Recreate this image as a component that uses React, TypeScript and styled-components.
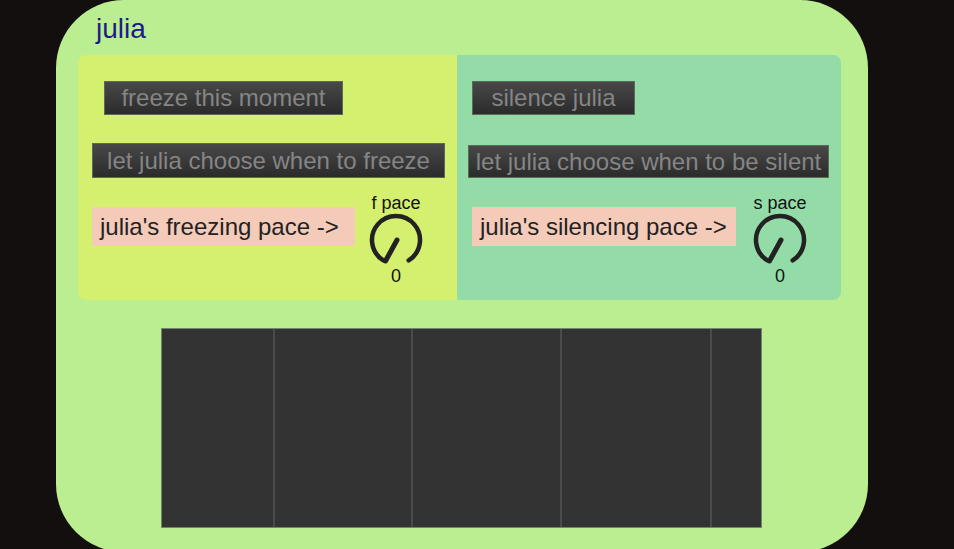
import React from 'react';
import styled, { createGlobalStyle } from "styled-components";

const GlobalStyle = createGlobalStyle`
  body {
    margin: 0;
    background: #130f0f;
    overflow: hidden;
    font-family: "Liberation Sans", Arial, sans-serif;
  }
`

type Side = 'left' | 'right'

const segments = [111, 138, 149, 150]

const Knob = (props: { label: string, value: number }) => {
    // arc over the top, gap of +-32deg round the bottom; pointer sits at the minimum
    return (
        <KnobWrapper>
            <KnobLabel>{props.label}</KnobLabel>
            <svg width="56" height="54" viewBox="0 0 56 54">
                <path d="M 15.3 47.4 A 24 24 0 1 1 40.7 47.4"
                      fill="none" stroke="#222" strokeWidth="4.5" strokeLinecap="round"/>
                <line x1="29" y1="27" x2="17.5" y2="48"
                      stroke="#222" strokeWidth="5" strokeLinecap="round"/>
            </svg>
            <KnobValue>{props.value}</KnobValue>
        </KnobWrapper>
    )
}

export default function App() {
    return (
        <Stage>
            <GlobalStyle/>
            <Patch>
                <Title>julia</Title>
                <Sections>
                    <Section side="left" tone="#d4f06e" width={379}>
                        <Button width={239} height={34} indent={26} top={0}>freeze this moment</Button>
                        <Button width={353} height={35} indent={14} top={28}>let julia choose when to freeze</Button>
                        <PaceRow indent={14}>
                            <PaceLabel width={263}>julia's freezing pace -&gt;</PaceLabel>
                            <KnobSlot gap={13}>
                                <Knob label="f pace" value={0}/>
                            </KnobSlot>
                        </PaceRow>
                    </Section>
                    <Section side="right" tone="#93dca7" width={384}>
                        <Button width={163} height={34} indent={15} top={0}>silence julia</Button>
                        <Button width={361} height={33} indent={11} top={30}>let julia choose when to be silent</Button>
                        <PaceRow indent={15}>
                            <PaceLabel width={264}>julia's silencing pace -&gt;</PaceLabel>
                            <KnobSlot gap={16}>
                                <Knob label="s pace" value={0}/>
                            </KnobSlot>
                        </PaceRow>
                    </Section>
                </Sections>
                <Timeline>
                    {segments.map((w, i) => (
                        <Segment key={i} first={i === 0} style={{width: w}}/>
                    ))}
                    <Segment first={false} style={{flex: 1}}/>
                </Timeline>
            </Patch>
        </Stage>
    );
}

const Stage = styled.div`
  height: 549px;
  padding-left: 56px;
`
const Patch = styled.div`
  box-sizing: border-box;
  width: 812px;
  height: 552px;
  padding: 15px 27px 0 22px;
  background: #bbee90;
  border-radius: 68px;
`
const Title = styled.div`
  margin-left: 18px;
  font-size: 28px;
  line-height: 28px;
  color: #1b1b8a;
`
const Sections = styled.div`
  display: flex;
  margin-top: 12px;
`
const Section = styled.div<{ side: Side, tone: string, width: number }>`
  box-sizing: border-box;
  width: ${p => p.width}px;
  height: 245px;
  padding-top: 26px;
  display: flex;
  flex-direction: column;
  align-items: flex-start;
  background: ${p => p.tone};
  border-radius: ${p => p.side === 'left' ? '8px 0 0 8px' : '0 8px 8px 0'};
`
const Button = styled.div<{ width: number, height: number, indent: number, top: number }>`
  box-sizing: border-box;
  width: ${p => p.width}px;
  height: ${p => p.height}px;
  margin-left: ${p => p.indent}px;
  margin-top: ${p => p.top}px;
  display: flex;
  align-items: center;
  justify-content: center;
  white-space: nowrap;
  font-size: 24px;
  line-height: 24px;
  color: #858585;
  background: linear-gradient(#484848, #2b2b2b);
  border: 1px solid #5e6a58;
`
const PaceRow = styled.div<{ indent: number }>`
  display: flex;
  align-items: flex-start;
  margin-top: 16px;
  margin-left: ${p => p.indent}px;
`
const PaceLabel = styled.div<{ width: number }>`
  box-sizing: border-box;
  width: ${p => p.width}px;
  height: 39px;
  margin-top: 13px;
  padding-left: 8px;
  display: flex;
  align-items: center;
  white-space: nowrap;
  font-size: 24px;
  line-height: 24px;
  color: #222;
  background: #f4cbb9;
`
const KnobSlot = styled.div<{ gap: number }>`
  margin-left: ${p => p.gap}px;
`
const KnobWrapper = styled.div`
  width: 56px;
  display: flex;
  flex-direction: column;
  align-items: center;
  color: #111;
  svg {
    display: block;
    margin-top: 1px;
  }
`
const KnobLabel = styled.div`
  font-size: 18px;
  line-height: 18px;
  white-space: nowrap;
`
const KnobValue = styled.div`
  font-size: 18px;
  line-height: 18px;
  margin-top: 0;
`
const Timeline = styled.div`
  box-sizing: border-box;
  display: flex;
  width: 601px;
  height: 200px;
  margin-top: 28px;
  margin-left: 83px;
  background: #333333;
  border: 1px solid #71876a;
`
const Segment = styled.div<{ first: boolean }>`
  box-sizing: border-box;
  height: 100%;
  border-left: ${p => p.first ? 'none' : '2px solid #4b4b4b'};
`
